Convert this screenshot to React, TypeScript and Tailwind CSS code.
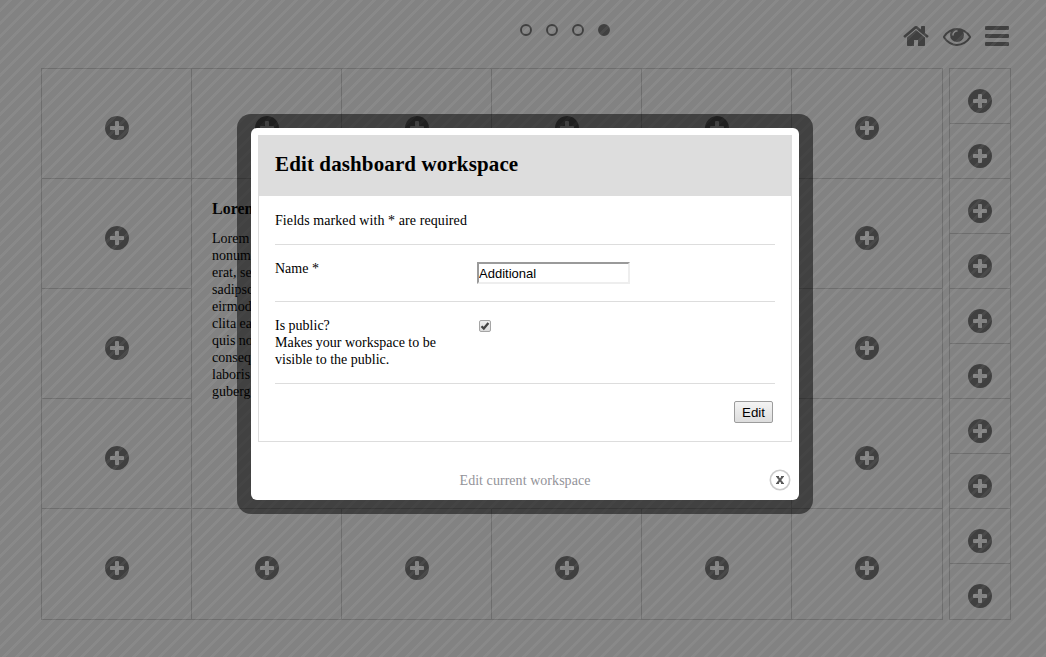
import type { ReactNode } from "react";

const PLUS =
  "M1216 832v-128q0-26-19-45t-45-19h-256v-256q0-26-19-45t-45-19h-128q-26 0-45 19t-19 45v256h-256q-26 0-45 19t-19 45v128q0 26 19 45t45 19h256v256q0 26 19 45t45 19h128q26 0 45-19t19-45v-256h256q26 0 45-19t19-45zm320-64q0 209-103 385.5t-279.5 279.5-385.5 103-385.5-103-279.5-279.5-103-385.5 103-385.5 279.5-279.5 385.5-103 385.5 103 279.5 279.5 103 385.5z";
const HOME =
  "M1472 992v480q0 26-19 45t-45 19h-384v-384h-256v384h-384q-26 0-45-19t-19-45v-480q0-1 .5-3t.5-3l575-474 575 474q1 2 1 6zm223-69l-62 74q-8 9-21 11h-3q-13 0-21-7l-692-577-692 577q-12 8-24 7-13-2-21-11l-62-74q-8-10-7-23.5t11-21.5l719-599q32-26 76-26t76 26l244 204v-195q0-14 9-23t23-9h192q14 0 23 9t9 23v408l219 182q10 8 11 21.5t-7 23.5z";
const EYE =
  "M1664 960q-152-236-381-353 61 104 61 225 0 185-131.5 316.5t-316.5 131.5-316.5-131.5-131.5-316.5q0-121 61-225-229 117-381 353 133 205 333.5 326.5t434.5 121.5 434.5-121.5 333.5-326.5zm-720-384q0-20-14-34t-34-14q-125 0-214.5 89.5t-89.5 214.5q0 20 14 34t34 14 34-14 14-34q0-86 61-147t147-61q20 0 34-14t14-34zm848 384q0 34-20 69-140 230-376.5 368.5t-499.5 138.5-499.5-139-376.5-368q-20-35-20-69t20-69q140-229 376.5-368t499.5-139 499.5 139 376.5 368q20 35 20 69z";

function Plus() {
  return (
    <svg viewBox="0 0 1536 1536" className="h-6 w-6 fill-[#404040]">
      <path d={PLUS} />
    </svg>
  );
}

function Cell({ children }: { children?: ReactNode }) {
  return (
    <div className="flex items-start justify-center border-t border-l border-[#6d6d6d] pt-[47px]">
      {children ?? <Plus />}
    </div>
  );
}

function SideCell() {
  return (
    <div className="flex items-start justify-center border-t border-l border-[#6d6d6d] pt-5">
      <Plus />
    </div>
  );
}

const LINES = [
  "Lorem",
  "nonumy",
  "erat, sed",
  "sadipsci",
  "eirmod",
  "clita eas",
  "quis nos",
  "consequ",
  "laboris",
  "guberg",
];

function Workspace() {
  return (
    <div className="flex gap-[6px] pl-[41px]">
      <div className="grid h-[552px] w-[902px] grid-cols-[repeat(5,150px)_151px] grid-rows-[repeat(4,110px)_111px] border-r border-b border-[#6d6d6d]">
        {Array.from({ length: 7 }, (_, i) => (
          <Cell key={i} />
        ))}
        <div className="col-span-4 row-span-3 overflow-hidden border-t border-l border-[#6d6d6d] pt-[21px] pl-5 text-black">
          <h3 className="text-base leading-[18px] font-bold">Lorem</h3>
          <div className="mt-3 text-sm leading-[17px] whitespace-nowrap">
            {LINES.map((line) => (
              <div key={line}>{line}</div>
            ))}
          </div>
        </div>
        {Array.from({ length: 11 }, (_, i) => (
          <Cell key={i + 7} />
        ))}
      </div>
      <div className="grid h-[552px] w-[62px] grid-rows-[repeat(9,55px)_56px] border-r border-b border-[#6d6d6d]">
        {Array.from({ length: 10 }, (_, i) => (
          <SideCell key={i} />
        ))}
      </div>
    </div>
  );
}

function Dialog() {
  return (
    <div className="absolute top-[114px] left-[237px] h-[400px] w-[576px] rounded-[14px] bg-black/50 p-[14px]">
      <div className="flex h-[372px] flex-col rounded-[6px] bg-white p-[7px] text-sm leading-[17px] text-black">
        <div className="h-[307px] border border-[#dddddd]">
          <h1 className="-mx-px -mt-px flex h-[61px] items-center bg-[#dddddd] pb-[2px] pl-[17px] text-[21px] font-bold tracking-[0.12px]">
            Edit dashboard workspace
          </h1>
          <div className="px-4">
            <p className="h-[49px] border-b border-[#dddddd] pt-4 tracking-[0.08px]">
              Fields marked with * are required
            </p>
            <div className="flex h-[57px] border-b border-[#dddddd]">
              <label htmlFor="name" className="w-[202px] pt-[15px]">Name *</label>
              <input
                id="name"
                defaultValue="Additional"
                className="mt-[17px] h-[22px] w-[153px] border-2 border-t-[#9a9a9a] border-r-[#eeeeee] border-b-[#eeeeee] border-l-[#9a9a9a] bg-white font-['Liberation_Sans',sans-serif] text-[13px] leading-4 outline-none"
              />
            </div>
            <div className="flex h-[82px] border-b border-[#dddddd]">
              <div className="w-[204px] pt-[15px]">
                Is public?
                <p className="w-[180px]">Makes your workspace to be visible to the public.</p>
              </div>
              <div className="mt-[18px] flex h-3 w-3 items-center justify-center rounded-[2px] border border-[#a5a5a5] bg-linear-to-b from-[#eeeeee] to-[#dcdcdc]">
                <svg viewBox="0 0 10 10" className="h-[10px] w-[10px]">
                  <path d="M1.5 5.2 3.8 7.5 8.4 1.9" fill="none" stroke="#444" strokeWidth="2.3" />
                </svg>
              </div>
            </div>
            <div className="flex justify-end pt-[17px] pr-[2px]">
              <button className="h-[22px] w-[39px] rounded-[2px] border border-[#9c9c9c] bg-linear-to-b from-[#f4f4f4] to-[#dddddd] pt-[2px] font-['Liberation_Sans',sans-serif] text-[13.33px] leading-4">
                Edit
              </button>
            </div>
          </div>
        </div>
        <div className="flex items-center pt-[27px] pr-px">
          <span className="flex-1 pl-[23px] text-center tracking-[0.05px] text-[#939399]">Edit current workspace</span>
          <svg viewBox="0 0 22 22" className="h-[22px] w-[22px]">
            <circle cx="11" cy="11" r="9.7" fill="#fff" stroke="#cccccc" strokeWidth="1.6" />
            <path d="M8.3 7.6 13.7 14.4M13.7 7.6 8.3 14.4" stroke="#5a5a5a" strokeWidth="2" />
            <path d="M7 7.5h3M12 7.5h3M7 14.5h3M12 14.5h3" stroke="#5a5a5a" strokeWidth="1" />
          </svg>
        </div>
      </div>
    </div>
  );
}

export default function App() {
  return (
    <div className="relative h-[657px] w-[1046px] overflow-hidden bg-[#828282] font-['Liberation_Serif',serif]">
      <header className="flex h-[68px] items-start">
        <div className="flex gap-[14px] pt-6 pl-[520px]">
          {[0, 1, 2, 3].map((i) => (
            <svg key={i} viewBox="0 0 12 12" className="h-3 w-3">
              <circle cx="6" cy="6" r="5" fill={i === 3 ? "#404040" : "none"} stroke="#404040" strokeWidth="1.9" />
            </svg>
          ))}
        </div>
        <nav className="ml-auto flex pt-[22px] pr-[37px]">
          <svg viewBox="0 0 1792 1792" className="mr-[13px] h-7 w-7 fill-[#404040]">
            <path d={HOME} />
          </svg>
          <svg viewBox="0 0 1792 1792" className="mr-[14px] h-7 w-7 fill-[#404040]">
            <path d={EYE} />
          </svg>
          <svg viewBox="0 0 24 28" className="h-7 w-6 fill-[#404040]">
            <rect y="4" width="24" height="4" rx="1" />
            <rect y="12" width="24" height="4" rx="1" />
            <rect y="20" width="24" height="4" rx="1" />
          </svg>
        </nav>
      </header>
      <Workspace />
      <div className="absolute inset-0 bg-[repeating-linear-gradient(135deg,transparent_0_5.8px,rgba(255,255,255,0.055)_6.4px_8.6px,transparent_9.19px)]" />
      <Dialog />
    </div>
  );
}
